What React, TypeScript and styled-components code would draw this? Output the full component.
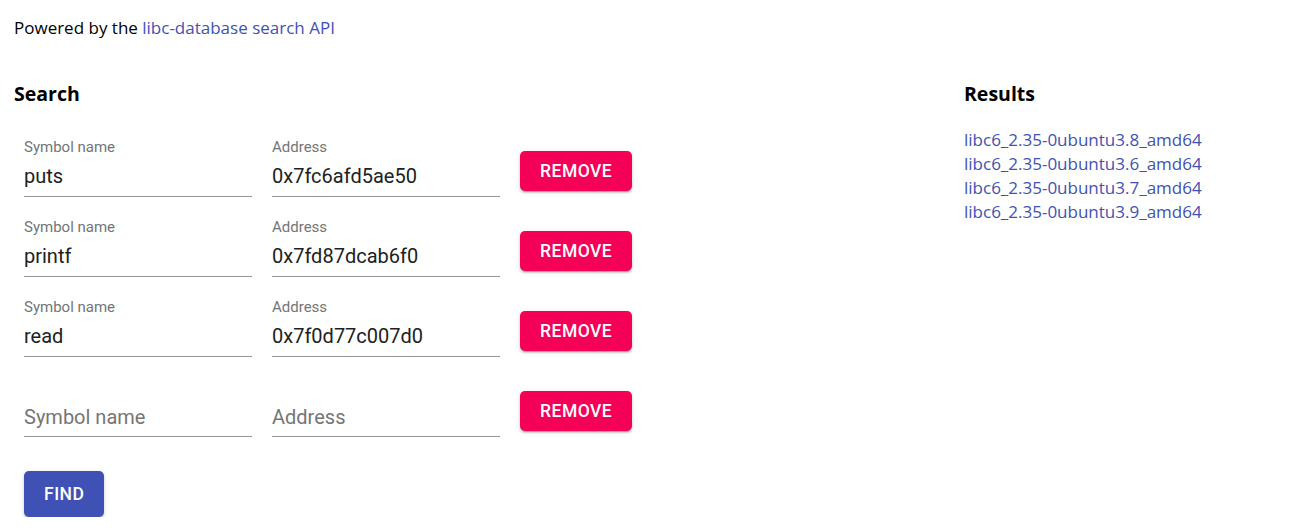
import React from "react";
import styled, { createGlobalStyle } from "styled-components";

const Global = createGlobalStyle`
  html, body { margin: 0; padding: 0; background: #fff; }
  body { font-family: "Open Sans", "Noto Sans", sans-serif; color: #000; }
  * { box-sizing: border-box; }
`;

const Page = styled.div`
  padding: 16px 14px 0 14px;
`;

const Intro = styled.p`
  margin: 0;
  font-size: 17px;
  line-height: 24px;
`;

const Link = styled.a`
  color: #3f51b5;
  text-decoration: none;
`;

const Columns = styled.div`
  display: grid;
  grid-template-columns: 950px 1fr;
  margin-top: 39px;
`;

const Heading = styled.h2`
  margin: 0;
  font-size: 19.5px;
  line-height: 28px;
  font-weight: 700;
  padding-top: 1px;
`;

const Rows = styled.div`
  display: flex;
  flex-direction: column;
  gap: 20px;
  margin-top: 29px;
  padding-left: 10px;
`;

const Row = styled.div`
  display: flex;
  align-items: flex-start;
  gap: 20px;
`;

const Field = styled.div`
  position: relative;
  width: 228px;
  height: 60px;
  padding-top: 20px;
  font-family: Roboto, sans-serif;
`;

const Label = styled.label<{ $shrink: boolean }>`
  position: absolute;
  left: 0;
  top: 0;
  color: #757575;
  font-size: 20px;
  line-height: 1;
  transform-origin: top left;
  transform: ${(p) => (p.$shrink ? "translate(0, 2px) scale(0.75)" : "translate(0, 30px) scale(1)")};
  pointer-events: none;
  white-space: nowrap;
`;

const Input = styled.input`
  display: block;
  width: 100%;
  height: 40px;
  margin: 0;
  padding: 7px 0 9px;
  border: 0;
  border-bottom: 1px solid #949494;
  outline: none;
  background: transparent;
  font-family: Roboto, sans-serif;
  font-size: 20px;
  line-height: 24px;
  color: #212121;
`;

const Button = styled.button<{ $color: string; $h: number }>`
  height: ${(p) => p.$h}px;
  padding: 0 20px;
  border: 0;
  border-radius: 5px;
  background: ${(p) => p.$color};
  color: #fff;
  font-family: Roboto, sans-serif;
  font-weight: 500;
  font-size: 17.5px;
  letter-spacing: 0.5px;
  text-transform: uppercase;
  box-shadow: 0px 3px 1px -2px rgba(0,0,0,0.2), 0px 2px 2px 0px rgba(0,0,0,0.14), 0px 1px 5px 0px rgba(0,0,0,0.12);
  cursor: pointer;
`;

const RemoveButton = styled(Button)`
  margin-top: 14px;
  width: 112px;
`;

const FindWrap = styled.div`
  margin-top: 34px;
  padding-left: 10px;
`;

const ResultList = styled.div`
  display: flex;
  flex-direction: column;
  margin-top: 20px;
  font-size: 17px;
  line-height: 24px;
`;

const rows = [
  { sym: "puts", addr: "0x7fc6afd5ae50" },
  { sym: "printf", addr: "0x7fd87dcab6f0" },
  { sym: "read", addr: "0x7f0d77c007d0" },
  { sym: "", addr: "" },
];

const results = [
  "libc6_2.35-0ubuntu3.8_amd64",
  "libc6_2.35-0ubuntu3.6_amd64",
  "libc6_2.35-0ubuntu3.7_amd64",
  "libc6_2.35-0ubuntu3.9_amd64",
];

function TextField({ label, value }: { label: string; value: string }) {
  return (
    <Field>
      <Label $shrink={value !== ""}>{label}</Label>
      <Input defaultValue={value} />
    </Field>
  );
}

export default function App() {
  return (
    <>
      <Global />
      <Page>
        <Intro>
          Powered by the <Link href="#">libc-database search API</Link>
        </Intro>
        <Columns>
          <div>
            <Heading>Search</Heading>
            <Rows>
              {rows.map((r, i) => (
                <Row key={i}>
                  <TextField label="Symbol name" value={r.sym} />
                  <TextField label="Address" value={r.addr} />
                  <RemoveButton $color="#f50057" $h={40}>Remove</RemoveButton>
                </Row>
              ))}
            </Rows>
            <FindWrap>
              <Button $color="#3f51b5" $h={46}>Find</Button>
            </FindWrap>
          </div>
          <div>
            <Heading>Results</Heading>
            <ResultList>
              {results.map((r) => (
                <Link key={r} href="#">{r}</Link>
              ))}
            </ResultList>
          </div>
        </Columns>
      </Page>
    </>
  );
}
